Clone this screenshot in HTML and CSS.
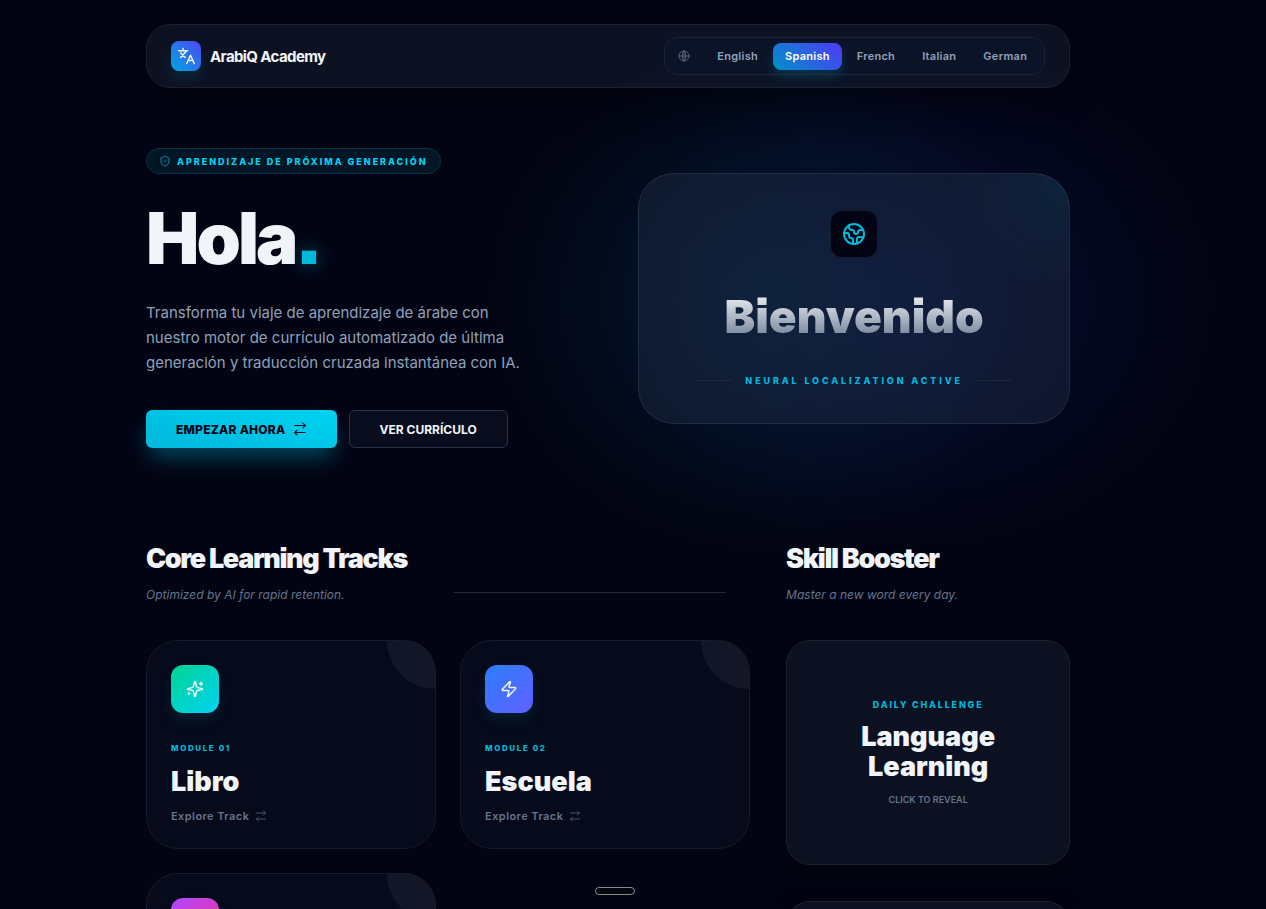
FILE: index.html
```html
<!DOCTYPE html>
<html lang="es">
  <head>
    <meta charset="UTF-8" />
    <title>ArabiQ Academy</title>
    <link rel="stylesheet" href="styles.css">
  </head>
  <body>
    <svg class="sprite" aria-hidden="true">
      <symbol id="arrows" viewBox="0 0 24 24"><path d="m17 2 4 4-4 4"/><path d="M3 6h18"/><path d="m7 14-4 4 4 4"/><path d="M21 18H3"/></symbol>
    </svg>
    <div class="page">
      <header class="topbar">
        <a class="brand" href="#">
          <span class="brand-mark">
            <svg class="icon" viewBox="0 0 24 24" width="18" height="18"><path d="M2 5h12M8 2v1M5 14l7-8M5 8l6 6"/><path d="m13 22 5-11 5 11M15 18h6"/></svg>
          </span>
          <span>ArabiQ Academy</span>
        </a>
        <nav class="langs" aria-label="Language">
          <svg class="icon langs-globe" viewBox="0 0 24 24" width="12" height="12"><circle cx="12" cy="12" r="10"/><path d="M12 2a14.500 14.500 0 0 0 0 20 14.500 14.500 0 0 0 0-20"/><path d="M2 12h20M12 2v20"/></svg>
          <button type="button">English</button>
          <button type="button" class="active">Spanish</button>
          <button type="button">French</button>
          <button type="button">Italian</button>
          <button type="button">German</button>
        </nav>
      </header>

      <main>
        <section class="hero">
          <div class="hero-text">
            <p class="badge">
              <svg class="icon" viewBox="0 0 24 24" width="12" height="12"><path d="M20 13c0 5-3.500 7.500-7.700 9a1 1 0 0 1-.7 0C7.500 20.500 4 18 4 13V6a1 1 0 0 1 1-1c2 0 4.500-1.200 6.200-2.700a1.200 1.200 0 0 1 1.500 0C14.500 3.800 17 5 19 5a1 1 0 0 1 1 1z"/><path d="m9 12 2 2 4-4"/></svg>
              <span>Aprendizaje de próxima generación</span>
            </p>
            <h1>Hola<span class="dot">.</span></h1>
            <p class="lead">Transforma tu viaje de aprendizaje de árabe con nuestro motor de currículo automatizado de última generación y traducción cruzada instantánea con IA.</p>
            <div class="actions">
              <button type="button" class="btn btn-primary">
                Empezar ahora
                <svg class="icon" width="14" height="14"><use href="#arrows"/></svg>
              </button>
              <button type="button" class="btn btn-ghost">Ver currículo</button>
            </div>
          </div>

          <div class="welcome-wrap">
            <div class="welcome">
              <span class="welcome-icon">
                <svg class="icon" viewBox="0 0 24 24" width="24" height="24"><path d="M21.540 15H17a2 2 0 0 0-2 2v4.540"/><path d="M7 3.340V5a3 3 0 0 0 3 3 2 2 0 0 1 2 2c0 1.100.9 2 2 2a2 2 0 0 0 2-2c0-1.100.9-2 2-2h3.170"/><path d="M11 21.950V18a2 2 0 0 0-2-2 2 2 0 0 1-2-2v-1a2 2 0 0 0-2-2H2.050"/><circle cx="12" cy="12" r="10"/></svg>
              </span>
              <h2>Bienvenido</h2>
              <p class="status">Neural localization active</p>
            </div>
          </div>
        </section>

        <div class="columns">
          <section>
            <div class="section-head">
              <div>
                <h2>Core Learning Tracks</h2>
                <p>Optimized by AI for rapid retention.</p>
              </div>
              <span class="rule"></span>
            </div>
            <div class="tracks">
              <article class="track">
                <span class="track-icon green">
                  <svg class="icon" viewBox="0 0 24 24" width="18" height="18"><path d="M9.940 15.500A2 2 0 0 0 8.500 14.060l-6.140-1.580a.5.5 0 0 1 0-.96L8.500 9.940A2 2 0 0 0 9.940 8.500l1.580-6.140a.5.5 0 0 1 .96 0l1.580 6.140a2 2 0 0 0 1.440 1.440l6.140 1.580a.5.5 0 0 1 0 .96l-6.140 1.580a2 2 0 0 0-1.440 1.440l-1.580 6.140a.5.5 0 0 1-.96 0z"/><path d="M20 3v4M22 5h-4M4 17v2M5 18H3"/></svg>
                </span>
                <p class="eyebrow">Module 01</p>
                <h3>Libro</h3>
                <a href="#">Explore Track <svg class="icon" width="12" height="12"><use href="#arrows"/></svg></a>
              </article>
              <article class="track">
                <span class="track-icon blue">
                  <svg class="icon" viewBox="0 0 24 24" width="18" height="18"><path d="M4 14a1 1 0 0 1-.78-1.630l9.900-10.200a.5.5 0 0 1 .86.460l-1.920 6.020A1 1 0 0 0 13 10h7a1 1 0 0 1 .78 1.630l-9.900 10.200a.5.5 0 0 1-.86-.46l1.920-6.020A1 1 0 0 0 11 14z"/></svg>
                </span>
                <p class="eyebrow">Module 02</p>
                <h3>Escuela</h3>
                <a href="#">Explore Track <svg class="icon" width="12" height="12"><use href="#arrows"/></svg></a>
              </article>
              <article class="track">
                <span class="track-icon pink"></span>
              </article>
            </div>
          </section>

          <aside>
            <div class="section-head">
              <div>
                <h2>Skill Booster</h2>
                <p>Master a new word every day.</p>
              </div>
            </div>
            <div class="boosters">
              <button type="button" class="flashcard">
                <span class="eyebrow">Daily challenge</span>
                <strong>Language Learning</strong>
                <small>Click to reveal</small>
              </button>
              <div class="flashcard"></div>
            </div>
          </aside>
        </div>
      </main>
    </div>
    <div class="dock"></div>
  </body>
</html>
```

FILE: styles.css
```css
* {
  box-sizing: border-box;
  margin: 0;
}
body {
  background: #020413;
  color: #f1f5f9;
  font-family: Inter, "Liberation Sans", sans-serif;
  font-size: 12px;
  font-feature-settings: "ss07";
  scrollbar-width: none;
}
html {
  scrollbar-width: none;
}
button {
  font: inherit;
  color: inherit;
  border: 0;
  background: none;
  cursor: pointer;
}
a {
  color: inherit;
  text-decoration: none;
}
.sprite {
  display: none;
}
.icon {
  flex: none;
  fill: none;
  stroke: currentColor;
  stroke-width: 2;
  stroke-linecap: round;
  stroke-linejoin: round;
}
.page {
  width: 73%;
  margin-left: 146px;
  padding: 24px 0;
}

/* top bar */
.topbar {
  position: relative;
  z-index: 1;
  display: flex;
  align-items: center;
  justify-content: space-between;
  height: 64px;
  padding: 0 24px;
  border: 1px solid #1c2030;
  border-radius: 24px;
  background: rgba(28, 36, 58, 0.44);
  box-shadow: 0 16px 32px rgba(0, 0, 0, 0.25);
}
.brand {
  display: flex;
  align-items: center;
  gap: 9px;
  font-size: 15px;
  font-weight: 700;
  letter-spacing: -0.04em;
}
.brand-mark {
  display: grid;
  place-items: center;
  width: 30px;
  height: 30px;
  border-radius: 8px;
  background: linear-gradient(45deg, #00a6e0, #4f46f5);
  box-shadow: 0 8px 12px rgba(0, 184, 219, 0.12);
}
.langs {
  display: flex;
  align-items: center;
  gap: 3px;
  height: 38px;
  padding: 0 5px;
  border: 1px solid #1a2439;
  border-radius: 14px;
  background: rgba(10, 20, 42, 0.6);
  color: #90a1b9;
}
.langs-globe {
  margin: 0 12px 0 8px;
  color: #52627b;
}
.langs button {
  height: 27px;
  padding: 0 12px;
  border-radius: 8px;
  font-size: 11px;
  font-weight: 600;
  letter-spacing: 0.025em;
}
.langs .active {
  background: linear-gradient(45deg, #0092c8, #4f39f6);
  box-shadow: 0 6px 12px rgba(0, 184, 219, 0.2);
  color: #fff;
}

/* hero */
.hero {
  display: grid;
  grid-template-columns: 1fr 1fr;
  align-items: center;
  gap: 60px;
  margin-top: 60px;
}
.badge {
  display: inline-flex;
  align-items: center;
  gap: 6px;
  height: 26px;
  padding: 0 12px;
  border: 1px solid #053345;
  border-radius: 13px;
  background: #021626;
  color: #00d3f2;
  font-size: 9px;
  font-weight: 800;
  letter-spacing: 0.22em;
  text-transform: uppercase;
}
.badge .icon {
  color: #0890a9;
}
h1 {
  margin-top: 28px;
  font-size: 71px;
  font-weight: 900;
  line-height: 72px;
  letter-spacing: -0.04em;
}
.dot {
  color: #00b8db;
  text-shadow: 0 0 18px rgba(0, 184, 219, 0.5);
}
.lead {
  max-width: 384px;
  margin-top: 26px;
  color: #90a1b9;
  font-size: 15px;
  line-height: 25px;
}
.actions {
  display: flex;
  gap: 12px;
  margin-top: 35px;
}
.btn {
  display: flex;
  align-items: center;
  gap: 7px;
  height: 38px;
  padding: 0 30px;
  border-radius: 6px;
  font-size: 12px;
  font-weight: 700;
  text-transform: uppercase;
}
.btn-primary {
  background: linear-gradient(15deg, #00b8db, #00d3f2);
  box-shadow: 0 12px 22px -4px rgba(0, 184, 219, 0.4);
  color: #020413;
  font-weight: 800;
  letter-spacing: 0.02em;
}
.btn-ghost {
  border: 1px solid #2a3448;
  background: #080c1d;
}
.welcome-wrap {
  position: relative;
}
.welcome-wrap::before {
  content: "";
  position: absolute;
  inset: -130px -150px;
  background:
    radial-gradient(closest-side, rgba(0, 100, 140, 0.2), transparent) 0 0 / 76% 100% no-repeat,
    radial-gradient(closest-side, rgba(20, 36, 140, 0.24), transparent) 100% 0 / 84% 100% no-repeat;
}
.welcome {
  position: relative;
  display: flex;
  flex-direction: column;
  align-items: center;
  padding: 36px;
  border: 1px solid rgba(255, 255, 255, 0.08);
  border-radius: 36px;
  background: radial-gradient(circle at 100% 0, rgba(0, 184, 219, 0.08), transparent 120px), rgba(30, 42, 66, 0.48);
}
.welcome-icon {
  display: grid;
  place-items: center;
  width: 48px;
  height: 48px;
  border: 1px solid #151b2c;
  border-radius: 12px;
  background: #020413;
  color: #00b8db;
}
.welcome h2 {
  margin-top: 30px;
  background: linear-gradient(#fff, #62748e);
  background-clip: text;
  color: transparent;
  font-size: 46px;
  font-weight: 900;
  line-height: 56px;
}
.status {
  display: flex;
  align-items: center;
  gap: 12px;
  margin-top: 30px;
  color: #00b8db;
  font-size: 9px;
  font-weight: 800;
  line-height: 13px;
  letter-spacing: 0.32em;
  text-transform: uppercase;
  white-space: nowrap;
}
.status::before,
.status::after {
  content: "";
  width: 36px;
  height: 1px;
  background: #1d293d;
}

/* lower columns */
.columns {
  display: grid;
  grid-template-columns: repeat(3, 1fr);
  align-items: start;
  gap: 36px;
  margin-top: 93px;
}
.columns > section {
  grid-column: span 2;
}
.section-head {
  display: flex;
  align-items: center;
}
.section-head > div {
  flex: 0 0 47%;
  white-space: nowrap;
}
.section-head h2 {
  font-size: 27px;
  font-weight: 900;
  line-height: 36px;
  letter-spacing: -0.05em;
}
.section-head p {
  margin-top: 9px;
  color: #62748e;
  font-size: 12px;
  font-style: italic;
  line-height: 18px;
}
.rule {
  flex: 1;
  height: 1px;
  margin: 40px 24px 0;
  background: #1d293d;
}
.eyebrow {
  color: #00b8db;
  font-size: 8px;
  font-weight: 800;
  line-height: 12px;
  letter-spacing: 0.2em;
  text-transform: uppercase;
}
.tracks {
  display: grid;
  grid-template-columns: 1fr 1fr;
  gap: 24px;
  margin-top: 36px;
}
.track {
  position: relative;
  overflow: hidden;
  min-height: 209px;
  padding: 24px;
  border: 1px solid #141c2d;
  border-radius: 32px;
  background: #060a1b;
}
.track::after {
  content: "";
  position: absolute;
  top: -48px;
  right: -48px;
  width: 96px;
  height: 96px;
  border-radius: 50%;
  background: rgba(255, 255, 255, 0.05);
}
.track-icon {
  display: grid;
  place-items: center;
  width: 48px;
  height: 48px;
  border-radius: 12px;
  box-shadow: 0 8px 14px rgba(0, 184, 219, 0.1);
}
.green {
  background: linear-gradient(135deg, #00d492, #00d3f2);
}
.blue {
  background: linear-gradient(135deg, #2b7fff, #615fff);
}
.pink {
  background: linear-gradient(135deg, #ad46ff, #f6339a);
}
.track .eyebrow {
  margin-top: 29px;
}
.track h3 {
  margin-top: 10px;
  font-size: 27px;
  font-weight: 900;
  line-height: 36px;
}
.track a {
  display: flex;
  align-items: center;
  gap: 6px;
  margin-top: 8px;
  color: #62748e;
  font-size: 11px;
  font-weight: 600;
  line-height: 16px;
  letter-spacing: 0.04em;
}
.track a .icon {
  color: #45556c;
}
.boosters {
  display: grid;
  gap: 36px;
  margin-top: 36px;
}
.flashcard {
  display: flex;
  flex-direction: column;
  align-items: center;
  justify-content: center;
  min-height: 225px;
  padding: 24px;
  border: 1px solid #1c2030;
  border-radius: 24px;
  background: #0c1122;
  box-shadow: 0 16px 32px rgba(0, 0, 0, 0.3);
}
.flashcard .eyebrow {
  font-size: 9px;
}
.flashcard strong {
  max-width: 160px;
  margin: 11px 0 12px;
  font-size: 27px;
  font-weight: 900;
  line-height: 30px;
}
.flashcard small {
  color: #62748e;
  font-size: 9px;
  font-weight: 600;
  line-height: 12px;
  text-transform: uppercase;
}
.dock {
  position: fixed;
  bottom: 14px;
  left: 595px;
  width: 40px;
  height: 8px;
  border: 1px solid #888a90;
  border-radius: 4px;
  background: #03070c;
}
```
